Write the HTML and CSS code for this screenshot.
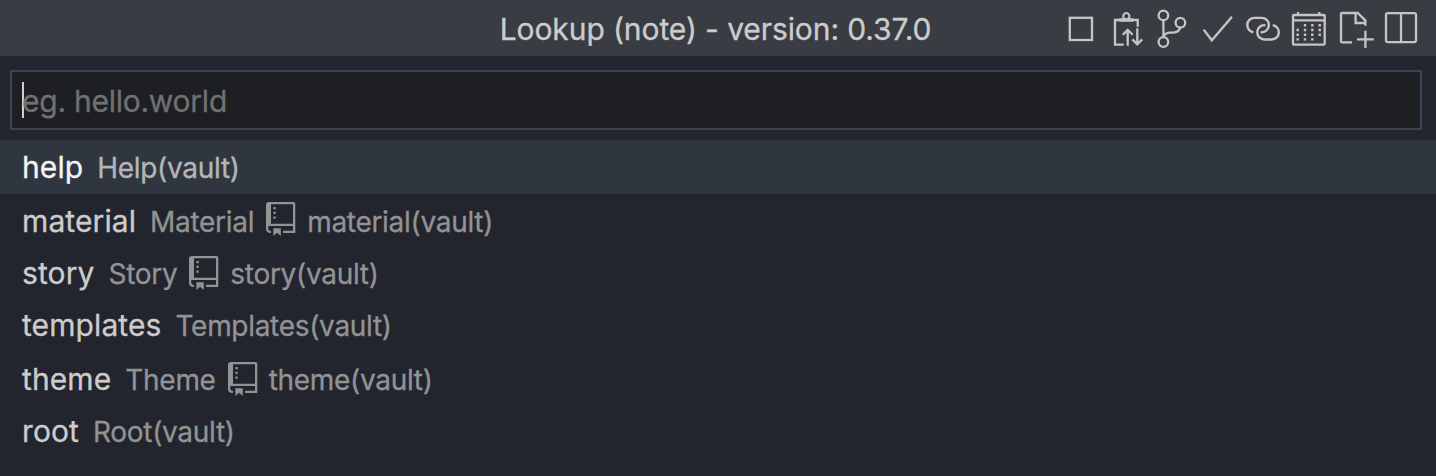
FILE: index.html
```html
<!DOCTYPE html>
<html lang="en">
<head>
<meta charset="utf-8">
<title>Lookup</title>
<link rel="stylesheet" href="styles.css">
</head>
<body>
<svg class="defs" width="0" height="0" aria-hidden="true">
  <symbol id="repo" viewBox="0 0 30 34">
    <path d="M3 0H27.5Q29.3 0 29.3 1.8V31H17V28.8H27V24H2.3V26.5Q2.3 28.8 5 28.8V31Q0 31 0 27V3Q0 0 3 0ZM5 2.2V21.8H27V2.2Z" fill="currentColor" fill-rule="evenodd"/>
    <path d="M7.4 5h2.3v2.2H7.400zM7.400 9.800h2.300v2.200H7.400zM7.400 14.500h2.300v2.200H7.400zM7.400 26.300h7.400V34l-3.700-3.300L7.400 34z" fill="currentColor"/>
  </symbol>
</svg>
<div class="quick-input">
  <header class="titlebar">
    <div class="title">Lookup (note) - version: 0.37.0</div>
    <div class="actions">
      <svg class="action" viewBox="0 0 46 56"><rect x="11.800" y="17.800" width="22.200" height="22.200"/></svg>
      <svg class="action" viewBox="0 0 46 56"><path d="M19.700 44.700H11V20H33.700V26.700"/><path class="solid" fill-rule="evenodd" d="M15.300 21.700V18.300H18.600A4.200 4.200 0 1 1 26 18.300H29.300V21.700ZM22.300 14.100a2.100 2.100 0 1 0 .01 0Z"/><path d="M23.700 45.700V30.200M18.800 34.800l4.900-4.900 4.900 4.900M33.300 28.300V44M28.400 39.400l4.900 4.900 4.900-4.900"/></svg>
      <svg class="action" viewBox="0 0 46 56"><circle cx="13.400" cy="15.400" r="4.800"/><circle cx="13.400" cy="42" r="4.800"/><circle cx="30.400" cy="22.700" r="4.800"/><path d="M13.400 20.200V37.200M30.200 27.600C29.500 31 27 32.600 23 32.600H20.500C16.500 32.600 14 34.500 13.400 37.200"/></svg>
      <svg class="action" viewBox="0 0 46 56"><path d="M7.700 29.600 15.800 40.300 36 16.800"/></svg>
      <svg class="action" viewBox="0 0 46 56"><path class="solid" transform="translate(1.700 9.500) scale(2.420 2.400)" d="M4.400 3h3.085a3.400 3.400 0 0 1 3.400 3.400v.205A3.400 3.400 0 0 1 7.485 10H7V9h.485A2.400 2.400 0 0 0 9.880 6.610V6.400A2.400 2.400 0 0 0 7.490 4H4.400A2.400 2.400 0 0 0 2 6.400v.205A2.394 2.394 0 0 0 4 8.960v1a3.400 3.400 0 0 1-3-3.350V6.400A3.405 3.405 0 0 1 4.400 3zM12 7.040v-1a3.400 3.400 0 0 1 3 3.360v.205A3.405 3.405 0 0 1 11.605 13h-3.080A3.400 3.400 0 0 1 5.120 9.610V9.400A3.400 3.400 0 0 1 8.520 6H9v1h-.480a2.400 2.400 0 0 0-2.390 2.400v.205A2.400 2.400 0 0 0 8.525 12h3.080A2.400 2.400 0 0 0 14 9.610V9.400a2.400 2.400 0 0 0-2-2.360z"/></svg>
      <svg class="action" viewBox="0 0 46 56"><rect x="5" y="15" width="31.700" height="29.700" rx="1"/><path d="M5 20.400H36.700M10 12V15M31.300 12V15"/><path class="dots" d="M17 25.300h.01M24.300 25.300h.01M31.700 25.300h.01M9.700 30h.01M17 30h.01M24.300 30h.01M31.700 30h.01M9.700 34.700h.01M17 34.700h.01M24.300 34.700h.01M31.700 34.700h.01M9.700 39.400h.01M17 39.400h.01M24.300 39.400h.01"/></svg>
      <svg class="action" viewBox="0 0 46 56"><path d="M18 42.300H8Q7 42.300 7 41.300V14Q7 13 8 13H23.800L31.400 20.600V25.700M21.600 13V23H31.400M31.400 30.700V48M23 39.400H39.800"/></svg>
      <svg class="action" viewBox="0 0 46 56"><rect x="6" y="13.100" width="30" height="29" rx="1.800"/><path d="M21 13V42"/></svg>
    </div>
  </header>
  <div class="filter">
    <div class="input"><span class="caret"></span><span class="placeholder">eg. hello.world</span></div>
  </div>
  <div class="list">
    <div class="row tall selected"><span class="label">help</span><span class="desc">Help(vault)</span></div>
    <div class="row"><span class="label">material</span><span class="desc">Material</span><svg class="repo raised"><use href="#repo"/></svg><span class="desc-tail">material(vault)</span></div>
    <div class="row"><span class="label">story</span><span class="desc">Story</span><svg class="repo"><use href="#repo"/></svg><span class="desc-tail">story(vault)</span></div>
    <div class="row tall"><span class="label">templates</span><span class="desc">Templates(vault)</span></div>
    <div class="row"><span class="label">theme</span><span class="desc">Theme</span><svg class="repo"><use href="#repo"/></svg><span class="desc-tail">theme(vault)</span></div>
    <div class="row"><span class="label">root</span><span class="desc">Root(vault)</span></div>
  </div>
</div>
</body>
</html>
```

FILE: styles.css
```css
* { box-sizing: border-box; }
body { margin: 0; background: #22252d; font-family: Inter, "Liberation Sans", sans-serif; }
.defs { display: block; }
.quick-input { width: 1436px; height: 476px; overflow: hidden; background: #22252d; color: #cccccc; -webkit-text-stroke: 0.3px currentColor; }
.titlebar { display: grid; grid-template-columns: 1fr auto 1fr; height: 56px; padding-right: 10px; background: #3a3c43; }
.title { grid-column: 2; margin-left: 5px; font-size: 30px; line-height: 58px; letter-spacing: -0.09px; white-space: nowrap; }
.actions { grid-column: 3; display: flex; justify-content: flex-end; }
.action { width: 46px; height: 56px; flex: none; fill: none; stroke: #c5c5c5; stroke-width: 2.3; }
.action .solid { fill: #c5c5c5; stroke: none; }
.action .dots { stroke-width: 2.4; stroke-linecap: square; }
.filter { padding: 14px 14px 10px 10px; }
.input { display: flex; align-items: center; height: 60px; padding-left: 10px; border: 2px solid #3d4355; background: #1e1f22; }
.caret { width: 2px; height: 36px; margin-right: -2px; background: #d0d0d0; }
.placeholder { padding-top: 2px; font-size: 30px; letter-spacing: -0.25px; color: #707173; }
.row { display: flex; height: 52px; padding-left: 22px; line-height: 54px; white-space: nowrap; }
.row.tall { height: 54px; }
.selected { background: #303640; }
.label { font-size: 30px; letter-spacing: 0.1px; color: #cccccc; }
.desc, .desc-tail { padding-top: 1px; font-size: 28px; letter-spacing: -0.3px; color: #929395; }
.desc { margin-left: 14px; }
.repo { width: 30px; height: 34px; margin: 10px 11px 0 12px; flex: none; color: #929395; }
.repo.raised { margin-top: 8px; }
.selected .label { color: #f4f4f4; }
.selected .desc { color: #b3b6b9; }
```
